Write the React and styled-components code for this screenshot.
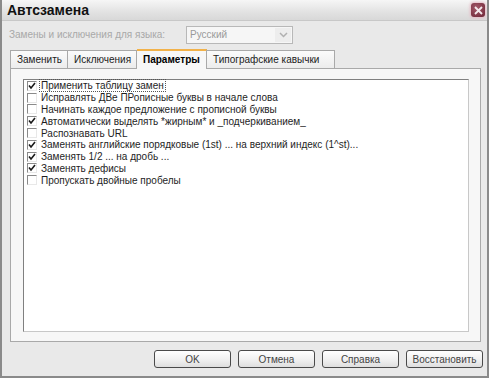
import React from "react";
import styled, { createGlobalStyle, css } from "styled-components";

const Global = createGlobalStyle`
  html, body { margin: 0; padding: 0; background: #e6e6e6; }
  body { font-family: "Liberation Sans", Arial, sans-serif; }
`;

const Window = styled.div`
  width: 489px;
  height: 378px;
  box-sizing: border-box;
  border-left: 2px solid #8a8a8a;
  border-right: 2px solid #8a8a8a;
  border-bottom: 2px solid #8a8a8a;
  background: #e9e9e9;
  display: flex;
  flex-direction: column;
  overflow: hidden;
`;

const TitleBar = styled.div`
  height: 20px;
  flex: none;
  display: flex;
  align-items: center;
  justify-content: space-between;
  padding: 0 2px 0 5px;
  background: linear-gradient(#f6f6f6, #e2e2e2 60%, #d8d8d8);
  border-bottom: 1px solid #c8c8c8;
`;

const Title = styled.span`
  font-size: 14px;
  font-weight: bold;
  color: #111;
`;

const CloseBtn = styled.div`
  width: 14px;
  height: 14px;
  border-radius: 3px;
  background: radial-gradient(circle at 40% 35%, #a45a6c, #6e2434);
  box-shadow: 0 0 3px 1px #e6b8c4;
  display: flex;
  align-items: center;
  justify-content: center;
`;

const LangRow = styled.div`
  height: 27px;
  flex: none;
  display: flex;
  align-items: center;
  padding-left: 7px;
`;

const LangLabel = styled.span`
  width: 177px;
  font-size: 10px;
  color: #a8a8a8;
`;

const Combo = styled.div`
  width: 107px;
  height: 18px;
  box-sizing: border-box;
  border: 1px solid #b8b8b8;
  background: #f6f6f6;
  display: flex;
  align-items: center;
  justify-content: space-between;
  padding: 0 1px 0 3px;
  font-size: 10px;
  color: #9a9a9a;
`;

const ComboArrow = styled.div`
  width: 16px;
  height: 14px;
  background: #ededed;
  display: flex;
  align-items: center;
  justify-content: center;
`;

const Tabs = styled.div`
  height: 20px;
  flex: none;
  display: flex;
  align-items: flex-end;
  padding-left: 8px;
`;

const Tab = styled.div`
  height: 18px;
  box-sizing: border-box;
  padding: 0 6px;
  width: ${(p) => p.w}px;
  display: flex;
  align-items: center;
  font-size: 10px;
  color: #222;
  background: linear-gradient(#fbfbfb, #ececec);
  border: 1px solid #a9a9a9;
  border-bottom: none;
  border-left: ${(p) => (p.first ? "1px solid #a9a9a9" : "none")};
  ${(p) =>
    p.active &&
    css`
      height: 20px;
      font-weight: bold;
      color: #000;
      background: #f7f7f7;
      border-top: 2px solid #f2b24a;
      margin-bottom: -1px;
      position: relative;
      z-index: 1;
      padding-bottom: 1px;
    `}
`;

const Panel = styled.div`
  margin: 0 6px 0 8px;
  height: 274px;
  flex: none;
  box-sizing: border-box;
  border: 1px solid #a9a9a9;
  background: #f7f7f7;
  padding: 10px 11px 9px 12px;
  display: flex;
`;

const List = styled.div`
  flex: 1;
  box-sizing: border-box;
  border: 1px solid #808080;
  border-right-color: #c8c8c8;
  border-bottom-color: #c8c8c8;
  background: #fff;
  padding: 0 0 0 3px;
  display: flex;
  flex-direction: column;
`;

const Row = styled.div`
  height: 11.8px;
  display: flex;
  align-items: center;
  gap: 3px;
  font-size: 10px;
  color: #1e1e1e;
  white-space: nowrap;
`;

const Box = styled.div`
  width: 10px;
  height: 10px;
  flex: none;
  box-sizing: border-box;
  border-top: 1px solid #8a8a8a;
  border-left: 1px solid #8a8a8a;
  border-right: 1px solid #e8e8e8;
  border-bottom: 1px solid #e8e8e8;
  background: #fff;
  display: flex;
  align-items: center;
  justify-content: center;
`;

const Label = styled.span`
  padding: 0 1px;
  outline: ${(p) => (p.focus ? "1px dotted #555" : "none")};
  line-height: 11px;
`;

const Footer = styled.div`
  flex: 1;
  display: flex;
  justify-content: flex-end;
  align-items: flex-start;
  padding: 8px 4px 0 0;
  gap: 7px;
`;

const Button = styled.div`
  width: 77px;
  height: 18px;
  box-sizing: border-box;
  border: 1px solid #4a4a4a;
  border-radius: 3px;
  background: linear-gradient(#ffffff, #f0f0f0 55%, #dedede);
  display: flex;
  align-items: center;
  justify-content: center;
  font-size: 10px;
  color: #444;
`;

const Check = () => (
  <svg width="8" height="8" viewBox="0 0 8 8">
    <path d="M1 3.5 L3 6 L7 1" fill="none" stroke="#1a1a1a" strokeWidth="1.6" />
  </svg>
);

const items = [
  ["Применить таблицу замен", true, true],
  ["Исправлять ДВе ПРописные буквы в начале слова", false],
  ["Начинать каждое предложение с прописной буквы", false],
  ["Автоматически выделять *жирным* и _подчеркиванием_", true],
  ["Распознавать URL", false],
  ["Заменять английские порядковые (1st) ... на верхний индекс (1^st)...", true],
  ["Заменять 1/2 ... на дробь ...", true],
  ["Заменять дефисы", true],
  ["Пропускать двойные пробелы", false],
];

export default function App() {
  return (
    <>
      <Global />
      <Window>
        <TitleBar>
          <Title>Автсзамена</Title>
          <CloseBtn>
            <svg width="9" height="9" viewBox="0 0 9 9">
              <path d="M1 1 L8 8 M8 1 L1 8" stroke="#f4e8ec" strokeWidth="1.8" />
            </svg>
          </CloseBtn>
        </TitleBar>
        <LangRow>
          <LangLabel>Замены и исключения для языка:</LangLabel>
          <Combo>
            <span>Русский</span>
            <ComboArrow>
              <svg width="9" height="6" viewBox="0 0 9 6">
                <path d="M1 1 L4.5 4.5 L8 1" fill="none" stroke="#b0b0b0" strokeWidth="1.5" />
              </svg>
            </ComboArrow>
          </Combo>
        </LangRow>
        <Tabs>
          <Tab first w={58}>Заменить</Tab>
          <Tab w={69}>Исключения</Tab>
          <Tab active w={70}>Параметры</Tab>
          <Tab w={128}>Типографские кавычки</Tab>
        </Tabs>
        <Panel>
          <List>
            {items.map(([t, c, f]) => (
              <Row key={t}>
                <Box>{c && <Check />}</Box>
                <Label focus={f}>{t}</Label>
              </Row>
            ))}
          </List>
        </Panel>
        <Footer>
          <Button>OK</Button>
          <Button>Отмена</Button>
          <Button>Справка</Button>
          <Button>Восстановить</Button>
        </Footer>
      </Window>
    </>
  );
}
